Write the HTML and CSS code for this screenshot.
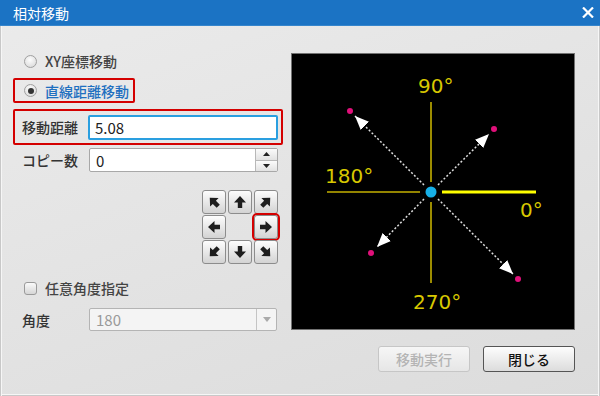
FILE: index.html
```html
<!DOCTYPE html>
<html lang="ja">
<head>
    <meta charset="UTF-8">
    <title>相対移動</title>
    <link rel="stylesheet" href="styles.css">
</head>
<body>
    <div class="window">
        <div class="titlebar">
            <span class="title">相対移動</span>
            <svg class="close" width="12" height="11" viewBox="0 0 12 11">
                <path d="M1 0.5 L11 10.5 M11 0.5 L1 10.5" stroke="#fff" stroke-width="2.2"/>
            </svg>
        </div>

        <div class="content">
            <div class="left">
                <label class="radio-row">
                    <span class="radio"></span>
                    <span>XY座標移動</span>
                </label>
                <label class="radio-row red-box radio-box">
                    <span class="radio checked"></span>
                    <span class="active-text">直線距離移動</span>
                </label>

                <div class="field-row red-box distance-box">
                    <span class="field-label">移動距離</span>
                    <div class="input focused">5.08</div>
                </div>

                <div class="field-row copies-row">
                    <span class="field-label">コピー数</span>
                    <div class="input spin">
                        <span class="value">0</span>
                        <span class="spin-btns">
                            <span class="spin-btn"><svg width="7" height="4" viewBox="0 0 7 4"><path d="M0 4 L3.5 0 L7 4z" fill="#222"/></svg></span>
                            <span class="spin-btn"><svg width="7" height="4" viewBox="0 0 7 4"><path d="M0 0 L3.5 4 L7 0z" fill="#222"/></svg></span>
                        </span>
                    </div>
                </div>

                <!-- 方向ボタン -->
                <div class="pad">
                    <button class="dir"><svg width="14" height="14" viewBox="0 0 14 14"><g transform="rotate(-45 7 7)"><path d="M7 1 L13 7.5 L9.2 7.5 L9.2 13 L4.8 13 L4.8 7.5 L1 7.5z" fill="#1e1e1e"/></g></svg></button>
                    <button class="dir"><svg width="14" height="14" viewBox="0 0 14 14"><path d="M7 1 L13 7.5 L9.2 7.5 L9.2 13 L4.8 13 L4.8 7.5 L1 7.5z" fill="#1e1e1e"/></svg></button>
                    <button class="dir"><svg width="14" height="14" viewBox="0 0 14 14"><g transform="rotate(45 7 7)"><path d="M7 1 L13 7.5 L9.2 7.5 L9.2 13 L4.8 13 L4.8 7.5 L1 7.5z" fill="#1e1e1e"/></g></svg></button>
                    <button class="dir"><svg width="14" height="14" viewBox="0 0 14 14"><g transform="rotate(-90 7 7)"><path d="M7 1 L13 7.5 L9.2 7.5 L9.2 13 L4.8 13 L4.8 7.5 L1 7.5z" fill="#1e1e1e"/></g></svg></button>
                    <span class="pad-gap"></span>
                    <button class="dir selected"><svg width="14" height="14" viewBox="0 0 14 14"><g transform="rotate(90 7 7)"><path d="M7 1 L13 7.5 L9.2 7.5 L9.2 13 L4.8 13 L4.8 7.5 L1 7.5z" fill="#1e1e1e"/></g></svg></button>
                    <button class="dir"><svg width="14" height="14" viewBox="0 0 14 14"><g transform="rotate(-135 7 7)"><path d="M7 1 L13 7.5 L9.2 7.5 L9.2 13 L4.8 13 L4.8 7.5 L1 7.5z" fill="#1e1e1e"/></g></svg></button>
                    <button class="dir"><svg width="14" height="14" viewBox="0 0 14 14"><g transform="rotate(180 7 7)"><path d="M7 1 L13 7.5 L9.2 7.5 L9.2 13 L4.8 13 L4.8 7.5 L1 7.5z" fill="#1e1e1e"/></g></svg></button>
                    <button class="dir"><svg width="14" height="14" viewBox="0 0 14 14"><g transform="rotate(135 7 7)"><path d="M7 1 L13 7.5 L9.2 7.5 L9.2 13 L4.8 13 L4.8 7.5 L1 7.5z" fill="#1e1e1e"/></g></svg></button>
                </div>

                <label class="radio-row check-row">
                    <span class="checkbox"></span>
                    <span>任意角度指定</span>
                </label>

                <div class="field-row angle-row">
                    <span class="field-label">角度</span>
                    <div class="input combo">
                        <span class="value">180</span>
                        <span class="combo-btn"><svg width="8" height="5" viewBox="0 0 8 5"><path d="M0 0 L4 5 L8 0z" fill="#aaa"/></svg></span>
                    </div>
                </div>
            </div>

            <!-- 角度の図 -->
            <div class="canvas">
                <svg width="282" height="275" viewBox="1 1 282 275">
                    <defs>
                        <marker id="head" viewBox="0 0 12 10" refX="12" refY="5" markerWidth="14" markerHeight="12" markerUnits="userSpaceOnUse" orient="auto">
                            <path d="M0 0 L12 5 L0 10z" fill="#fff"/>
                        </marker>
                    </defs>
                    <g stroke="#c4b000" stroke-width="1.6">
                        <line x1="140" y1="49" x2="140" y2="129"/>
                        <line x1="140" y1="149" x2="140" y2="230"/>
                        <line x1="36" y1="139" x2="129" y2="139"/>
                    </g>
                    <line x1="151" y1="139" x2="245" y2="139" stroke="#ffff00" stroke-width="3"/>
                    <g stroke="#ddd" stroke-width="1.5" stroke-dasharray="2 2" marker-end="url(#head)">
                        <line x1="133" y1="132" x2="64" y2="63"/>
                        <line x1="147" y1="132" x2="198" y2="81"/>
                        <line x1="133" y1="146" x2="86" y2="194"/>
                        <line x1="147" y1="146" x2="222" y2="221"/>
                    </g>
                    <g fill="#e0107a">
                        <circle cx="59" cy="58" r="3"/>
                        <circle cx="203" cy="76" r="3"/>
                        <circle cx="80" cy="200" r="3"/>
                        <circle cx="227" cy="226" r="3"/>
                    </g>
                    <circle cx="140" cy="139" r="5.5" fill="#17b0e8"/>
                    <g class="deg">
                        <text x="127" y="40">90°</text>
                        <text x="34" y="130">180°</text>
                        <text x="229" y="164">0°</text>
                        <text x="122" y="256">270°</text>
                    </g>
                </svg>
            </div>
        </div>

        <div class="footer">
            <button class="btn" disabled>移動実行</button>
            <button class="btn">閉じる</button>
        </div>
    </div>
</body>
</html>
```

FILE: styles.css
```css
* {
    box-sizing: border-box;
}
body {
    margin: 0;
    font-family: 'Noto Sans CJK JP', sans-serif;
    font-size: 14px;
    font-weight: 500;
    color: #333;
}
.window {
    width: 600px;
    height: 396px;
    background: linear-gradient(160deg, #ebebeb, #dcdcdc);
    box-shadow: inset 1px 0 0 #c8c8c8, inset 2px 0 0 #f6f6f6, inset -1px 0 0 #c8c8c8, inset -2px 0 0 #f6f6f6, inset 0 -1px 0 #c8c8c8, inset 0 -2px 0 #f6f6f6;
    overflow: hidden;
}
.titlebar {
    height: 26px;
    background: #1b73c4;
    color: #fff;
    display: flex;
    align-items: center;
    justify-content: space-between;
    padding: 0 6px 0 13px;
    border-bottom: 1px solid #3585cc;
    font-weight: 400;
}
.title {
    line-height: 26px;
}
.content {
    height: 320px;
    display: flex;
    padding: 25px 0 0 13px;
    gap: 8px;
}
.left {
    width: 270px;
    display: flex;
    flex-direction: column;
}
.radio-row {
    height: 20px;
    display: flex;
    align-items: center;
    gap: 8px;
    padding-left: 11px;
    color: #444;
}
.red-box {
    border: 2px solid #d40000;
    border-radius: 2px;
}
.radio-box {
    width: 122px;
    height: 25px;
    margin-top: 7px;
    padding-left: 9px;
}
.active-text {
    color: #1f70c0;
}
.radio {
    width: 13px;
    height: 13px;
    border-radius: 50%;
    border: 1px solid #a0a0a0;
    background: radial-gradient(circle at 45% 35%, #fdfdfd, #d4d4d4);
    display: flex;
    align-items: center;
    justify-content: center;
}
.radio.checked::after {
    content: '';
    width: 6px;
    height: 6px;
    border-radius: 50%;
    background: #333;
}
.checkbox {
    width: 13px;
    height: 13px;
    border-radius: 3px;
    border: 1px solid #9a9a9a;
    background: linear-gradient(#fafafa, #d6d6d6);
}
.field-row {
    display: flex;
    align-items: center;
    color: #333;
}
.field-label {
    width: 66px;
    flex: none;
}
.distance-box {
    height: 36px;
    margin-top: 6px;
    padding: 0 3px 0 7px;
}
.input {
    height: 25px;
    flex: 1;
    background: #fff;
    border: 1px solid #a8a8a8;
    border-radius: 2px;
    display: flex;
    align-items: center;
    padding-left: 6px;
    color: #222;
    font-size: 15px;
    font-weight: 400;
}
.input.focused {
    border: 2px solid #2a9fe0;
    padding-left: 5px;
}
.copies-row {
    height: 24px;
    margin-top: 3px;
    padding: 0 5px 0 9px;
}
.copies-row .field-label,
.angle-row .field-label {
    width: 67px;
}
.copies-row .input {
    height: 24px;
}
.value {
    flex: 1;
}
.spin-btns {
    width: 22px;
    height: 100%;
    display: flex;
    flex-direction: column;
    border-left: 1px solid #b8b8b8;
}
.spin-btn {
    flex: 1;
    display: flex;
    align-items: center;
    justify-content: center;
    background: linear-gradient(#fbfbfb, #e2e2e2);
}
.spin-btn + .spin-btn {
    border-top: 1px solid #b8b8b8;
}
.pad {
    align-self: flex-end;
    margin: 18px 5px 0 0;
    display: grid;
    grid-template-columns: repeat(3, 24px);
    grid-auto-rows: 24px;
    column-gap: 2px;
    row-gap: 1px;
}
.dir {
    width: 24px;
    height: 24px;
    padding: 0;
    border: 1px solid #8c8c8c;
    border-radius: 3px;
    background: linear-gradient(#fdfdfd, #d3d3d3);
    display: flex;
    align-items: center;
    justify-content: center;
}
.dir.selected {
    outline: 2px solid #d40000;
    outline-offset: 0;
}
.check-row {
    margin-top: 14px;
}
.angle-row {
    height: 23px;
    margin-top: 10px;
    padding: 0 6px 0 9px;
}
.combo {
    height: 23px;
    background: #f4f4f4;
    color: #9a9a9a;
    border-color: #b4b4b4;
}
.combo-btn {
    width: 20px;
    height: 100%;
    border-left: 1px solid #c4c4c4;
    display: flex;
    align-items: center;
    justify-content: center;
}
.canvas {
    width: 284px;
    height: 277px;
    margin-top: 2px;
    background: #000;
    border: 1px solid #727272;
}
.canvas svg {
    display: block;
}
.deg text {
    font-family: 'DejaVu Sans', sans-serif;
    font-size: 20px;
    font-weight: 400;
    fill: #d8c800;
}
.footer {
    display: flex;
    justify-content: flex-end;
    gap: 13px;
    padding-right: 25px;
}
.btn {
    width: 92px;
    height: 26px;
    font-family: 'Noto Sans CJK JP', sans-serif;
    font-size: 14px;
    font-weight: 500;
    color: #111;
    border: 1px solid #555;
    border-radius: 3px;
    background: linear-gradient(#fdfdfd, #dcdcdc);
    padding: 0;
}
.btn:disabled {
    color: #b4b4b4;
    border-color: #c6c6c6;
    background: linear-gradient(#f6f6f6, #e6e6e6);
}
```
